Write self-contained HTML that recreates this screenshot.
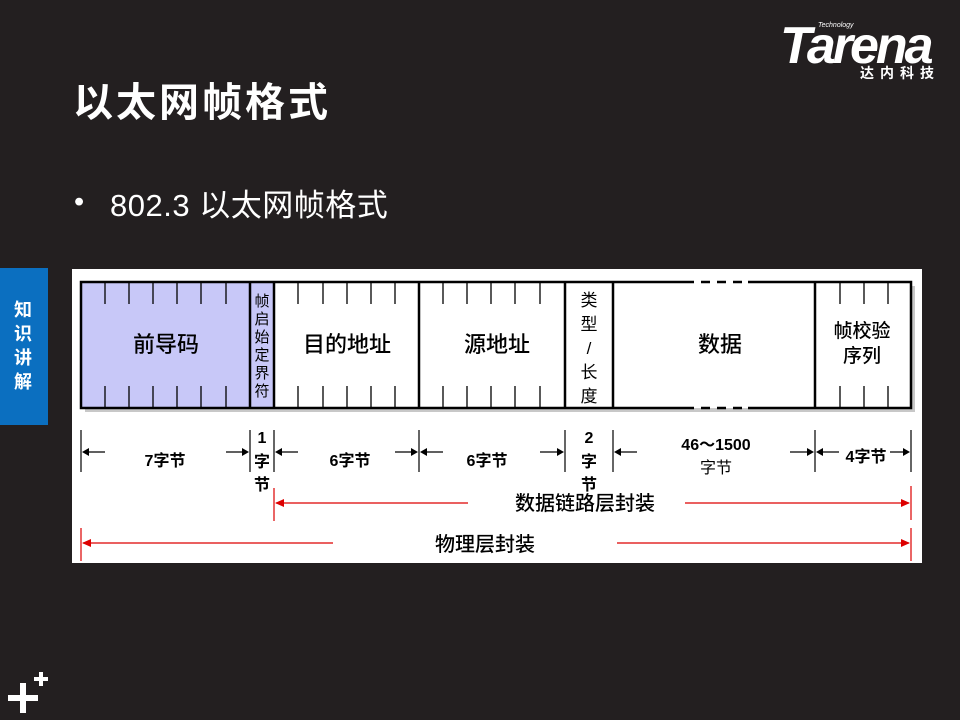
<!DOCTYPE html>
<html><head><meta charset="utf-8"><style>
body{margin:0;width:960px;height:720px;background:#231f20;position:relative;overflow:hidden;font-family:"Liberation Sans","Noto Sans CJK SC",sans-serif;}
.a{position:absolute}
</style></head><body>
<div class="a" style="left:73px;top:70px;color:#fff;font-size:40px;font-weight:bold;letter-spacing:3px">以太网帧格式</div>
<div class="a" style="left:74px;top:186px;color:#fff;font-size:29px">•</div>
<div class="a" style="left:110px;top:180px;color:#fff;font-size:31px;letter-spacing:0.5px">802.3 以太网帧格式</div>
<div class="a" style="left:780px;top:23px;color:#fff;font-size:52px;font-weight:bold;font-style:italic;letter-spacing:-3px;line-height:46px">Tarena</div>
<div class="a" style="left:818px;top:22px;color:#fff;font-size:7px;font-style:italic">Technology</div>
<div class="a" style="left:860px;top:63px;color:#fff;font-size:14px;font-weight:bold;letter-spacing:6px">达内科技</div>
<div class="a" style="left:0;top:268px;width:48px;height:157px;background:#0b6fc0"></div>
<div class="a" style="left:14px;top:298px;width:20px;color:#fff;font-size:18px;font-weight:bold;line-height:24px">知识讲解</div>
<svg class="a" style="left:0;top:665px" width="60" height="55"><path d="M8 33h30M23 18v30" stroke="#fff" stroke-width="6"/><path d="M34 14h14M41 7v14" stroke="#fff" stroke-width="4"/></svg>
<svg class="a" style="left:0;top:0" width="960" height="720" font-family="Liberation Sans,Noto Sans CJK SC,sans-serif">
<rect x="72" y="269" width="850" height="294" fill="#fff"/>
<rect x="85" y="286" width="830" height="126" fill="#c8c8c8"/>
<rect x="81" y="282" width="830" height="126" fill="#fff"/>
<rect x="81" y="282" width="193" height="126" fill="#c8c8f8"/>
<g stroke="#000" stroke-width="1.3">
<path d="M105 282v22M129 282v22M153 282v22M177 282v22M201 282v22M226 282v22M105 386v22M129 386v22M153 386v22M177 386v22M201 386v22M226 386v22"/>
<path d="M298 282v22M323 282v22M347 282v22M371 282v22M395 282v22M298 386v22M323 386v22M347 386v22M371 386v22M395 386v22"/>
<path d="M443 282v22M467 282v22M491 282v22M515 282v22M540 282v22M443 386v22M467 386v22M491 386v22M515 386v22M540 386v22"/>
<path d="M840 282v22M864 282v22M888 282v22M840 386v22M864 386v22M888 386v22"/>
</g>
<g stroke="#000" stroke-width="2.5" fill="none">
<path d="M685 282H81V408H685M748 282H911V408H748"/>
<path d="M685 282h63M685 408h63" stroke-dasharray="9 7"/>
<path d="M250 282v126M274 282v126M419 282v126M565 282v126M613 282v126M815 282v126"/>
</g>
<g font-size="22" text-anchor="middle" fill="#000" font-weight="500">
<text x="166" y="352">前导码</text><text x="347" y="352">目的地址</text><text x="497" y="352">源地址</text><text x="720" y="352">数据</text>
<text x="862" y="337" font-size="19">帧校验</text><text x="862" y="362" font-size="19">序列</text>
</g>
<g font-size="17" text-anchor="middle">
<text x="589" y="306">类</text><text x="589" y="330">型</text><text x="589" y="354">/</text><text x="589" y="378">长</text><text x="589" y="402">度</text>
</g>
<g font-size="15" text-anchor="middle">
<text x="262" y="306">帧</text><text x="262" y="324">启</text><text x="262" y="342">始</text><text x="262" y="360">定</text><text x="262" y="378">界</text><text x="262" y="396">符</text>
</g>
<g stroke="#000" stroke-width="1.2"><path d="M81 430v42M250 430v42M274 430v42M419 430v42M565 430v42M613 430v42M815 430v42M911 430v42"/>
<path d="M85 452h20M226 452h20M278 452h20M395 452h20M423 452h20M540 452h20M617 452h20M790 452h20M819 452h20M890 452h18"/></g>
<g fill="#000"><path d="M82 452l7-4v8zM249 452l-7-4v8zM275 452l7-4v8zM418 452l-7-4v8zM420 452l7-4v8zM564 452l-7-4v8zM614 452l7-4v8zM814 452l-7-4v8zM816 452l7-4v8zM910 452l-7-4v8z"/></g>
<g font-size="16" font-weight="bold" text-anchor="middle">
<text x="165" y="466">7字节</text><text x="350" y="466">6字节</text><text x="487" y="466">6字节</text><text x="866" y="462">4字节</text>
<text x="262" y="443">1</text><text x="262" y="467">字</text><text x="262" y="490">节</text>
<text x="589" y="443">2</text><text x="589" y="467">字</text><text x="589" y="490">节</text>
<text x="716" y="450">46～1500</text><text x="716" y="473" font-weight="normal">字节</text>
</g>
<g stroke="#d00" stroke-width="1.2"><path d="M274 488v33M911 486v34M81 528v33M911 528v33M276 503h192M685 503h224M83 543h250M617 543h292"/></g>
<g fill="#d00"><path d="M275 503l9-4v8zM910 503l-9-4v8zM82 543l9-4v8zM910 543l-9-4v8z"/></g>
<g font-size="20" text-anchor="middle" font-weight="500"><text x="585" y="510">数据链路层封装</text><text x="485" y="551">物理层封装</text></g>
</svg>
</body></html>
